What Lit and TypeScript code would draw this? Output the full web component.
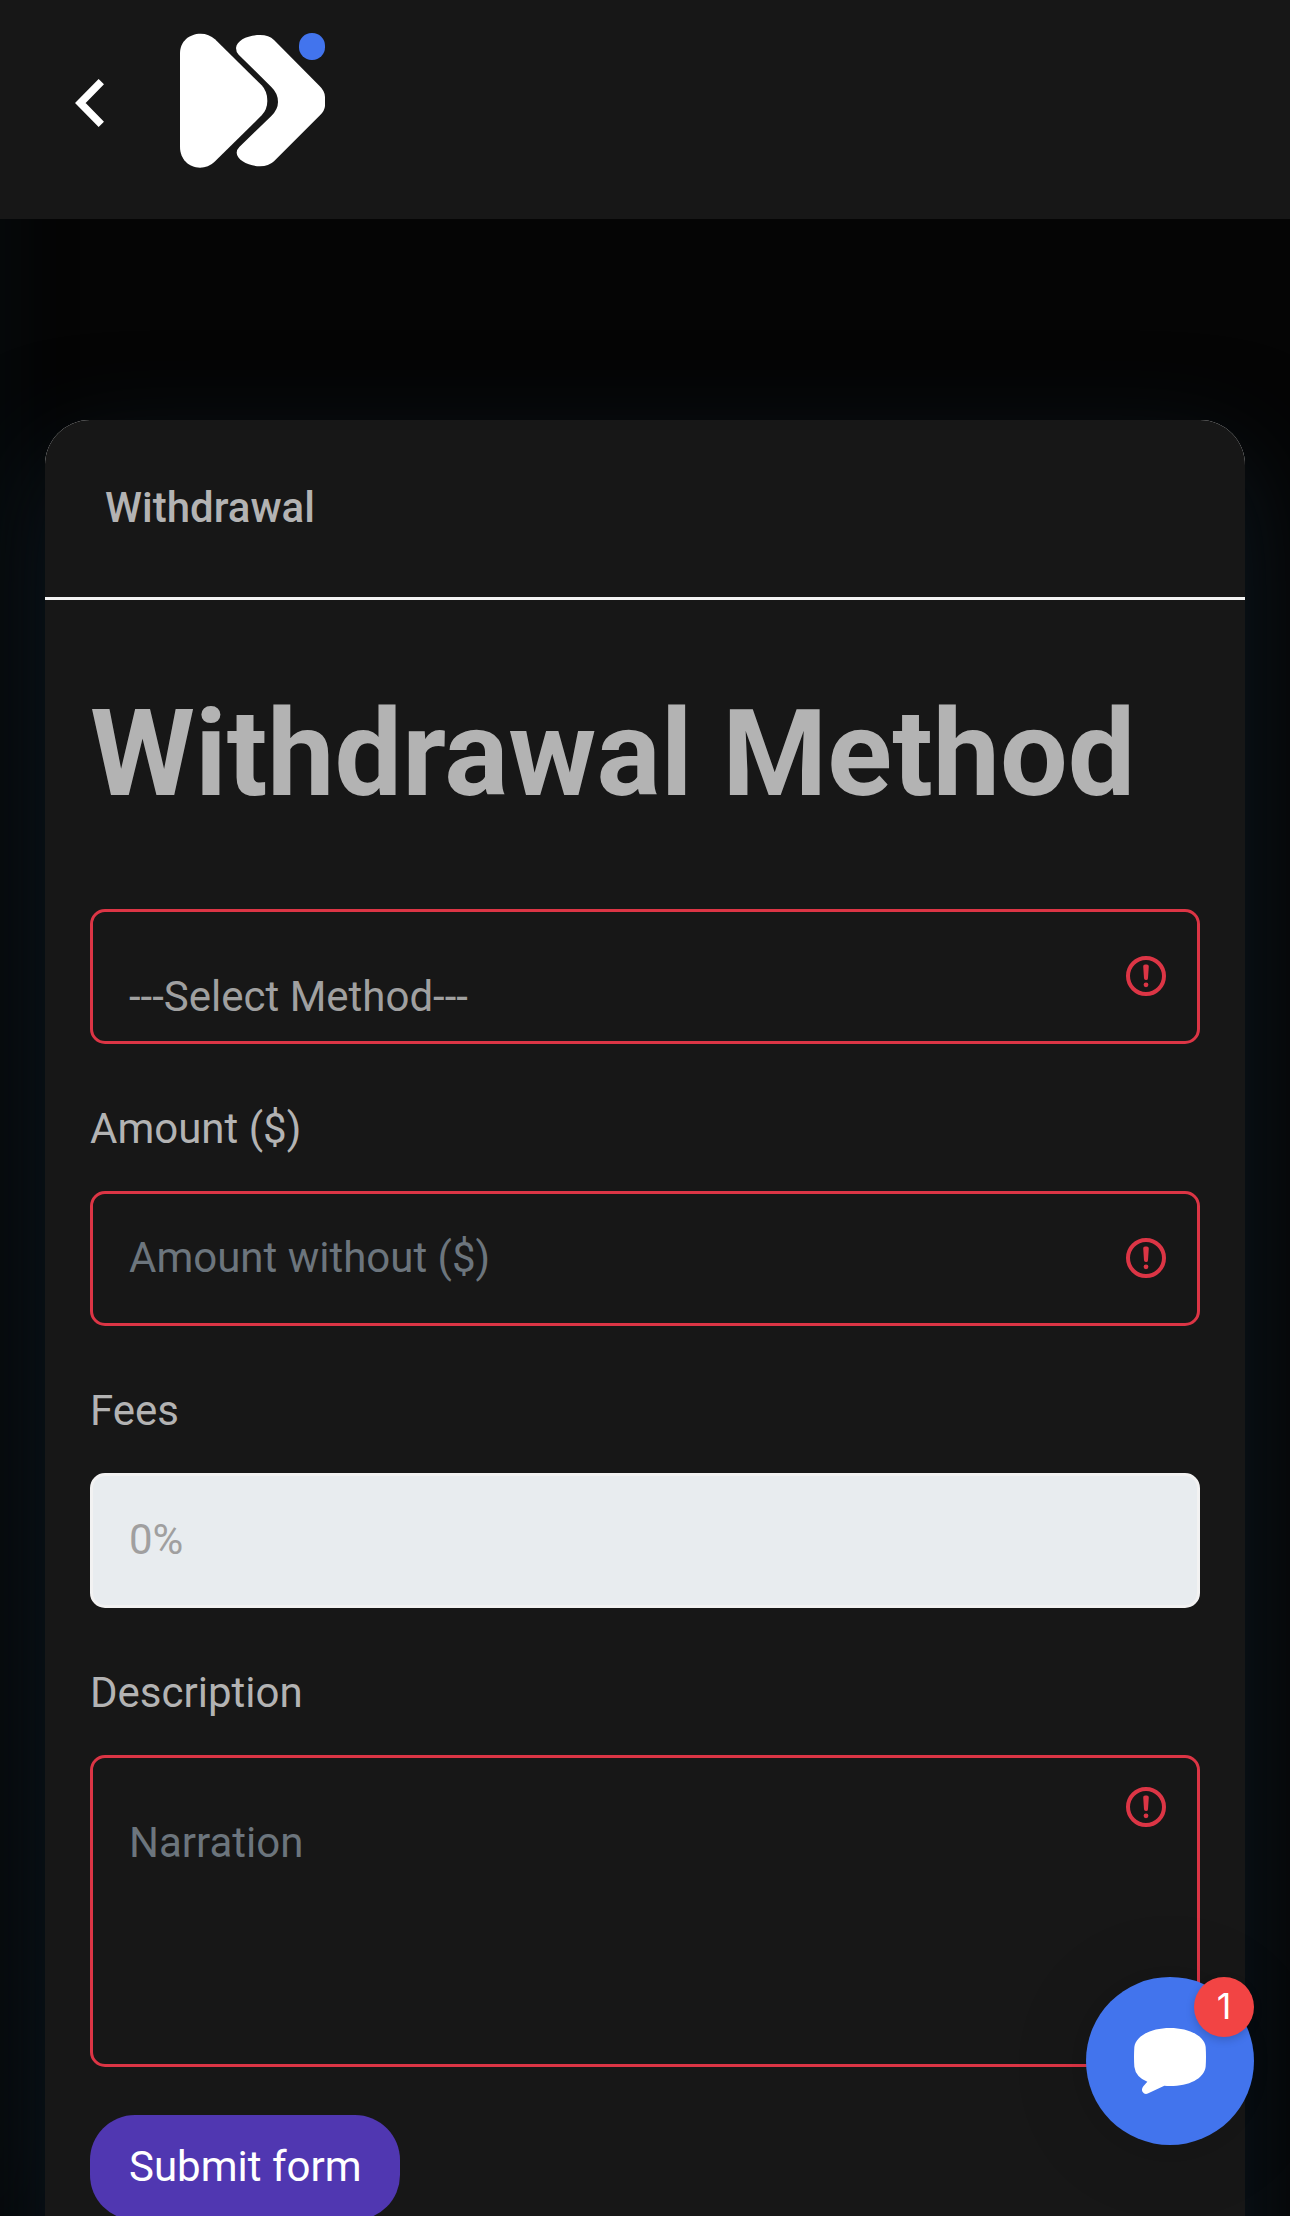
import { LitElement, html, css, svg } from "lit";
import { customElement } from "lit/decorators.js";

const alertIcon = html`<svg class="alert" viewBox="0 0 12 12" fill="none" stroke="#dc3545">
  <circle cx="6" cy="6" r="4.5" />
  <path stroke-linejoin="round" d="M5.8 3.6h.4L6 6.5z" />
  <circle cx="6" cy="8.2" r=".6" fill="#dc3545" stroke="none" />
</svg>`;

const logoShapes = svg`
  <path fill="#fff" d="M540 159C540 124 568 101 602 101Q627 101 645 118L785 256Q802 274 802 302Q802 328 785 346L643 486Q625 503 600 503C566 503 540 477 540 441Z" />
  <path fill="#fff" d="M716 164Q708 156 708 144C710 120 745 105 780 105Q807 105 822 120L958 257Q975 273 975 291V318Q974 332 960 346L822 484Q806 499 780 499C747 498 710 480 710 458Q710 449 718 441L814 348Q834 328 834 306Q834 280 814 261Z" />
  <rect x="897" y="99" width="78" height="81" rx="38" fill="#4274ed" />`;

@customElement("app-root")
export class AppRoot extends LitElement {
  static styles = css`
    :host {
      display: block;
      position: relative;
      box-sizing: border-box;
      width: 100%;
      height: 2216px;
      overflow: hidden;
      background: #050505;
      color: #b3b3b3;
      font: 400 42px/63px Roboto, "Liberation Sans", sans-serif;
    }
    * { box-sizing: border-box; }
    .edge {
      position: absolute;
      top: 0;
      left: -30px;
      width: 30px;
      height: 2216px;
      box-shadow: 0 0 72px rgba(18, 38, 54, 0.36);
    }
    .topbar {
      position: relative;
      height: 219px;
      background: #171717;
      display: flex;
      align-items: flex-start;
    }
    .back { width: 29px; height: 48px; margin: 79px 0 0 75px; }
    .logo { width: 145px; height: 135px; margin: 33px 0 0 76px; }
    .card {
      position: relative;
      margin: 201px 45px 0;
      height: 1900px;
      border-radius: 45px;
      background: #fff;
      box-shadow: 0 36px 105px rgba(18, 38, 54, 0.6);
    }
    .card-head {
      height: 180px;
      padding: 56px 60px 0;
      border-bottom: 3px solid #f3f3f3;
      border-radius: 45px 45px 0 0;
      background: #171717;
      font-weight: 500;
    }
    .card-body {
      height: 1720px;
      padding: 82px 45px 0;
      display: flex;
      flex-direction: column;
      background: #171717;
    }
    h1 { margin: 0; font-size: 120px; line-height: 144px; font-weight: 700; white-space: nowrap; }
    .field {
      position: relative;
      height: 135px;
      flex: none;
      border: 3px solid #dc3545;
      border-radius: 15px;
      display: flex;
      align-items: center;
      justify-content: space-between;
      padding: 0 27px 2px 36px;
      color: #6c757d;
    }
    .select { margin-top: 83px; color: #a0a0a0; }
    .select .value { margin-top: 42px; }
    .label { margin: 53px 0 31px; }
    .fees { background: #e8ecef; border-color: #f2f2f2; color: #a09f9f; }
    .area { height: 312px; align-items: flex-start; padding-top: 25px; }
    .area .value { margin-top: 28px; }
    .alert { width: 48px; height: 48px; display: block; }
    .submit {
      align-self: flex-start;
      width: 310px;
      height: 105px;
      margin-top: 48px;
      padding: 20px 0 0 39px;
      border-radius: 45px;
      background: #5037b1;
      color: #fff;
      white-space: nowrap;
    }
    .chat {
      position: absolute;
      left: 1086px;
      top: 1977px;
      width: 168px;
      height: 168px;
      border-radius: 50%;
      background: #4274ed;
      box-shadow: 0 3px 18px rgba(0, 0, 0, 0.08), 0 6px 96px rgba(0, 0, 0, 0.08);
    }
    .bubble { display: block; width: 72px; height: 66px; margin: 51px 0 0 48px; }
    .badge {
      position: absolute;
      right: 0;
      top: 0;
      width: 60px;
      height: 60px;
      border-radius: 50%;
      background: #f24444;
      box-shadow: 0 3px 9px rgba(0, 0, 0, 0.18);
      color: #fff;
      font: 400 36px/58px Inter, sans-serif;
      text-align: center;
    }
  `;

  render() {
    return html`
      <div class="edge"></div>
      <header class="topbar">
        <svg class="back" viewBox="0 0 29 48" fill="none" stroke="#fff" stroke-width="7.5">
          <path d="M26.3 2.7L5.3 24L26.3 45.3" />
        </svg>
        <svg class="logo" viewBox="540 99 435 405">${logoShapes}</svg>
      </header>
      <main class="card">
        <div class="card-head">Withdrawal</div>
        <div class="card-body">
          <h1>Withdrawal Method</h1>
          <div class="field select"><span class="value">---Select Method---</span>${alertIcon}</div>
          <div class="label">Amount ($)</div>
          <div class="field"><span>Amount without ($)</span>${alertIcon}</div>
          <div class="label">Fees</div>
          <div class="field fees"><span>0%</span></div>
          <div class="label">Description</div>
          <div class="field area"><span class="value">Narration</span>${alertIcon}</div>
          <div class="submit">Submit form</div>
        </div>
      </main>
      <div class="chat">
        <svg class="bubble" viewBox="252 234 216 198">
          <path fill="#fff" d="M360 234C417 234 464 258 467 291Q469 321 467 350C462 386 417 408 360 408Q351 408 343 407L295 430Q284 435 278 426Q273 418 280 409L292 395Q257 381 253 350Q251 321 253 291C257 258 303 234 360 234Z" />
        </svg>
        <div class="badge">1</div>
      </div>
    `;
  }
}
